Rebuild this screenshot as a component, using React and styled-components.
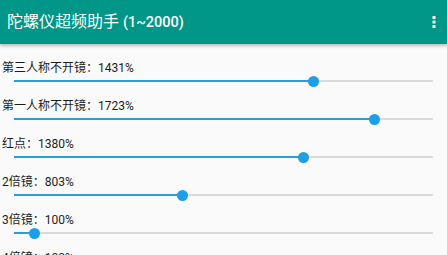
import React from 'react';
import styled, { createGlobalStyle } from 'styled-components';

const GlobalStyle = createGlobalStyle`
  html, body {
    margin: 0;
    padding: 0;
    background: #fafafa;
    overflow: hidden;
  }
  body {
    font-family: Roboto, "Noto Sans CJK SC", sans-serif;
  }
`;

const MIN = 1;
const MAX = 2000;

const Page = styled.div`
  width: 447px;
  height: 255px;
  overflow: hidden;
  background: #fafafa;
`;

const AppBar = styled.div`
  height: 44px;
  background: #009688;
  display: flex;
  align-items: center;
  justify-content: space-between;
  padding: 0 10px 0 7px;
  box-shadow: 0 2px 3px rgba(0, 0, 0, 0.25);
  position: relative;
  z-index: 1;
`;

const Title = styled.div`
  color: #fff;
  font-size: 16px;
  font-weight: 400;
  margin-top: -4px;
  white-space: nowrap;
`;

const Latin = styled.span`
  font-size: ${(p) => p.size}px;
  font-weight: ${(p) => p.weight || 400};
`;

const List = styled.div`
  display: flex;
  flex-direction: column;
  padding-top: 16px;
`;

const Row = styled.div`
  display: flex;
  flex-direction: column;
  height: 38px;
`;

const Label = styled.div`
  height: 16px;
  line-height: 16px;
  font-size: 12px;
  color: #1c1c1c;
  padding-left: 2px;
  white-space: nowrap;
`;

const SliderBox = styled.div`
  height: 10px;
  margin: 0 14px;
  position: relative;
  display: flex;
  align-items: center;
`;

const Track = styled.div`
  flex: 1;
  height: 2px;
  background: #dadada;
  position: relative;
`;

const Fill = styled.div`
  position: absolute;
  left: 0;
  top: 0;
  height: 2px;
  background: #2a9fd6;
`;

const Thumb = styled.div`
  position: absolute;
  top: 50%;
  width: 11px;
  height: 11px;
  margin: -5.5px 0 0 -5.5px;
  border-radius: 50%;
  background: #1e9de8;
`;

const items = [
  { label: '第三人称不开镜', value: 1431 },
  { label: '第一人称不开镜', value: 1723 },
  { label: '红点', value: 1380 },
  { label: '2倍镜', value: 803 },
  { label: '3倍镜', value: 100 },
  { label: '4倍镜', value: 100 },
];

function MenuIcon() {
  return (
    <svg width="6" height="14" viewBox="0 0 6 14">
      <rect x="1.5" y="1" width="3" height="3" rx="0.5" fill="#fff" />
      <rect x="1.5" y="5.5" width="3" height="3" rx="0.5" fill="#fff" />
      <rect x="1.5" y="10" width="3" height="3" rx="0.5" fill="#fff" />
    </svg>
  );
}

function SeekRow({ label, value }) {
  const pct = ((value - MIN) / (MAX - MIN)) * 100;
  return (
    <Row>
      <Label>{label}：{value}%</Label>
      <SliderBox>
        <Track>
          <Fill style={{ width: `${pct}%` }} />
          <Thumb style={{ left: `${pct}%` }} />
        </Track>
      </SliderBox>
    </Row>
  );
}

export default function App() {
  return (
    <Page>
      <GlobalStyle />
      <AppBar>
        <Title>
          陀螺仪超频助手 <Latin size={14.5} weight={500}>(1~2000)</Latin>
        </Title>
        <MenuIcon />
      </AppBar>
      <List>
        {items.map((it) => (
          <SeekRow key={it.label} label={it.label} value={it.value} />
        ))}
      </List>
    </Page>
  );
}
